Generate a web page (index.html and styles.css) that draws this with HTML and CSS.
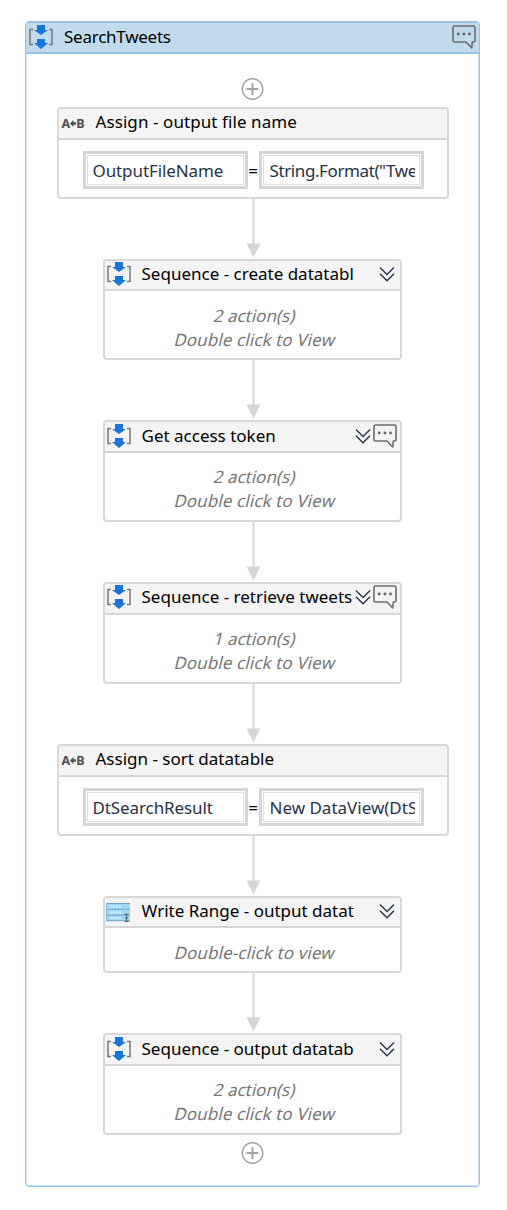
FILE: index.html
```html
<!DOCTYPE html>
<html lang="en">
<head>
<meta charset="utf-8">
<title>SearchTweets</title>
<link rel="stylesheet" href="styles.css">
</head>
<body>
<svg class="defs" width="0" height="0">
  <symbol id="sequence" viewBox="0 0 26 26">
    <path d="M5 5.500H2V20.500H5M21 5.500H24V20.500H21" fill="none" stroke="#777" stroke-width="1.500"/>
    <path d="M9 1H17V6H20L13 11L6 6H9ZM9 15H17V19H20L13 25L6 19H9Z" fill="#1976d8"/>
  </symbol>
  <symbol id="comment" viewBox="0 0 26 26">
    <path d="M3.500 2H22.500Q24 2 24 3.500V16.500Q24 18 22.500 18H21.300L20.700 24L15 18H3.500Q2 18 2 16.500V3.500Q2 2 3.500 2Z" fill="none" stroke="#6c6c6c" stroke-width="1.600" stroke-linejoin="round"/>
    <g fill="#666"><circle cx="7.200" cy="10" r="1.450"/><circle cx="12.900" cy="10" r="1.450"/><circle cx="18.500" cy="10" r="1.450"/></g>
  </symbol>
  <symbol id="expand" viewBox="0 0 16 16">
    <path d="M1 1.500L8 8.500L15 1.500M1 7.700L8 14.700L15 7.700" fill="none" stroke="#28344a" stroke-width="1.400"/>
  </symbol>
  <symbol id="add" viewBox="0 0 25 24">
    <circle cx="12.500" cy="12" r="10.300" fill="none" stroke="#a3a3a3" stroke-width="1.400"/>
    <path d="M6.500 12H18.500M12.500 6V18" stroke="#a3a3a3" stroke-width="2"/>
  </symbol>
  <symbol id="arrow" viewBox="0 0 17 60">
    <path d="M8.500 0V46" stroke="#d6d6d6" stroke-width="2"/>
    <path d="M1.500 44.500H15.500L8.500 58.500Z" fill="#d6d6d6"/>
  </symbol>
  <symbol id="range" viewBox="0 0 24 19">
    <path d="M0 0H24V18H0Z" fill="#a1d8f2"/>
    <path d="M0 .5H24M0 6.300H24M0 12.200H24M0 17.700H24" stroke="#6aa5d6"/>
    <path d="M.5 0V18" stroke="#83bce4"/>
    <path d="M4 3.500H16M4 9.300H16M4 15H16" stroke="#c8ebfa" stroke-width="2.200" stroke-dasharray="2.300 .6"/>
    <path d="M18.500 11.200H22.500M20.500 11.200V18.500M18.500 18.500H22.500M19 15H22" stroke="#59636b" stroke-width="1.100"/>
  </symbol>
</svg>
<main class="workflow">
  <header class="workflow-head">
    <svg class="icon"><use href="#sequence"/></svg>
    <h1 class="title root-title">SearchTweets</h1>
    <svg class="icon"><use href="#comment"/></svg>
  </header>
  <div class="flow">
    <svg class="add"><use href="#add"/></svg>
    <section class="card assign">
      <header class="head"><span class="ab">A<svg class="ab-arrow" viewBox="0 0 7 8"><path d="M0 4L4 0V2.500H7V5.500H4V8Z" fill="#505050"/></svg>B</span><h2 class="title t-file">Assign - output file name</h2></header>
      <div class="fields"><div class="field"><span class="value">OutputFileName</span></div><span class="equals">=</span><div class="field source"><span class="value format">String.Format("Twe</span></div></div>
    </section>
    <svg class="arrow"><use href="#arrow"/></svg>
    <section class="card first">
      <header class="head"><svg class="icon"><use href="#sequence"/></svg><h2 class="title">Sequence - create datatabl</h2><svg class="expand"><use href="#expand"/></svg></header>
      <div class="body"><p class="count">2 action(s)</p><p class="hint">Double click to View</p></div>
    </section>
    <svg class="arrow"><use href="#arrow"/></svg>
    <section class="card noted">
      <header class="head token"><svg class="icon"><use href="#sequence"/></svg><h2 class="title">Get access token</h2><svg class="expand"><use href="#expand"/></svg><svg class="icon"><use href="#comment"/></svg></header>
      <div class="body"><p class="count">2 action(s)</p><p class="hint">Double click to View</p></div>
    </section>
    <svg class="arrow"><use href="#arrow"/></svg>
    <section class="card noted">
      <header class="head"><svg class="icon"><use href="#sequence"/></svg><h2 class="title">Sequence - retrieve tweets</h2><svg class="expand"><use href="#expand"/></svg><svg class="icon"><use href="#comment"/></svg></header>
      <div class="body"><p class="count">1 action(s)</p><p class="hint">Double click to View</p></div>
    </section>
    <svg class="arrow"><use href="#arrow"/></svg>
    <section class="card assign">
      <header class="head"><span class="ab">A<svg class="ab-arrow" viewBox="0 0 7 8"><path d="M0 4L4 0V2.500H7V5.500H4V8Z" fill="#505050"/></svg>B</span><h2 class="title">Assign - sort datatable</h2></header>
      <div class="fields"><div class="field"><span class="value">DtSearchResult</span></div><span class="equals">=</span><div class="field source"><span class="value">New DataView(DtS</span></div></div>
    </section>
    <svg class="arrow"><use href="#arrow"/></svg>
    <section class="card write">
      <header class="head"><svg class="range"><use href="#range"/></svg><h2 class="title">Write Range - output datat</h2><svg class="expand"><use href="#expand"/></svg></header>
      <div class="body"><p class="hint">Double-click to view</p></div>
    </section>
    <svg class="arrow"><use href="#arrow"/></svg>
    <section class="card last">
      <header class="head"><svg class="icon"><use href="#sequence"/></svg><h2 class="title">Sequence - output datatab</h2><svg class="expand"><use href="#expand"/></svg></header>
      <div class="body"><p class="count">2 action(s)</p><p class="hint">Double click to View</p></div>
    </section>
    <svg class="add add-end"><use href="#add"/></svg>
  </div>
</main>
</body>
</html>
```
FILE: styles.css
```css
* { box-sizing: border-box; }
body { margin: 0; padding: 21px 0 0 25px; background: #fff; font-family: "Noto Sans", "Open Sans", sans-serif; font-size: 17px; color: #000; }
svg { display: block; flex: none; }
.defs { position: absolute; }
h1, h2, p { margin: 0; font-weight: 400; }
.workflow { width: 455px; height: 1166px; border: 1px solid #92c2e4; border-radius: 4px; box-shadow: inset 0 0 0 1px #d1e6f5; overflow: hidden; }
.workflow-head { height: 32px; display: flex; align-items: center; padding: 0 2px 2px; background: #c1dbed; border-top: 1px solid #92c2e4; border-bottom: 2px solid #98c5e5; }
.icon { width: 26px; height: 26px; }
.title { font-size: 17px; line-height: 24px; white-space: nowrap; overflow: hidden; flex: 1; }
.root-title { padding-left: 10px; letter-spacing: -0.25px; }
.flow { display: flex; flex-direction: column; align-items: center; padding: 23px 1px 0 0; }
.add { width: 25px; height: 24px; margin-bottom: 6px; }
.add-end { margin: 6px 0 0; }
.card { width: 299px; height: 102px; border: 2px solid #d8d8d8; border-radius: 4px; background: #fff; overflow: hidden; }
.first { height: 101px; }
.write { height: 77px; }
.assign { width: 392px; height: 92px; margin-left: 1px; }
.head { height: 30px; display: flex; align-items: center; background: #f4f4f4; border-bottom: 2px solid #d6d6d6; padding: 0 5px 2px 1px; }
.head .title { padding-left: 10px; }
.noted .head { height: 31px; padding: 0 2px 3px 1px; }
.noted .token { padding-bottom: 1px; }
.last .head { height: 31px; padding-bottom: 1px; }
.noted .body, .last .body { padding-top: 12px; }
.expand { width: 16px; height: 16px; }
.noted .expand { margin-right: 1px; }
.assign .head { height: 31px; padding: 0 5px 3px 3px; }
.ab { display: flex; align-items: center; width: 24px; padding-top: 2px; font: 700 12.5px "Noto Sans", sans-serif; color: #505050; }
.ab-arrow { width: 6px; height: 7px; }
.t-file { letter-spacing: 0.08px; }
.fields { display: flex; align-items: center; padding: 11px 0 0 24px; }
.field { width: 165px; height: 38px; border: 3px solid #d6d6d6; padding: 1px; box-shadow: inset 0 0 0 1px #fff, inset 0 0 0 2px #dedede; }
.value { display: block; height: 32px; margin: -1px 5px 0 4px; padding-left: 2px; line-height: 33px; overflow: hidden; white-space: nowrap; color: #263246; letter-spacing: -0.1px; }
.source .value { padding-left: 3px; letter-spacing: 0; }
.source .format { letter-spacing: -0.4px; }
.equals { width: 11px; text-align: center; }
.body { padding: 13px 0 0 5px; text-align: center; color: #777; line-height: 24px; white-space: nowrap; }
.body p { transform: skewX(-14deg); }
.hint { letter-spacing: 0.1px; }
.range { width: 24px; height: 19px; margin: 2px 2px 0 0; }
.arrow { width: 17px; height: 60px; margin-left: 2px; }
```
